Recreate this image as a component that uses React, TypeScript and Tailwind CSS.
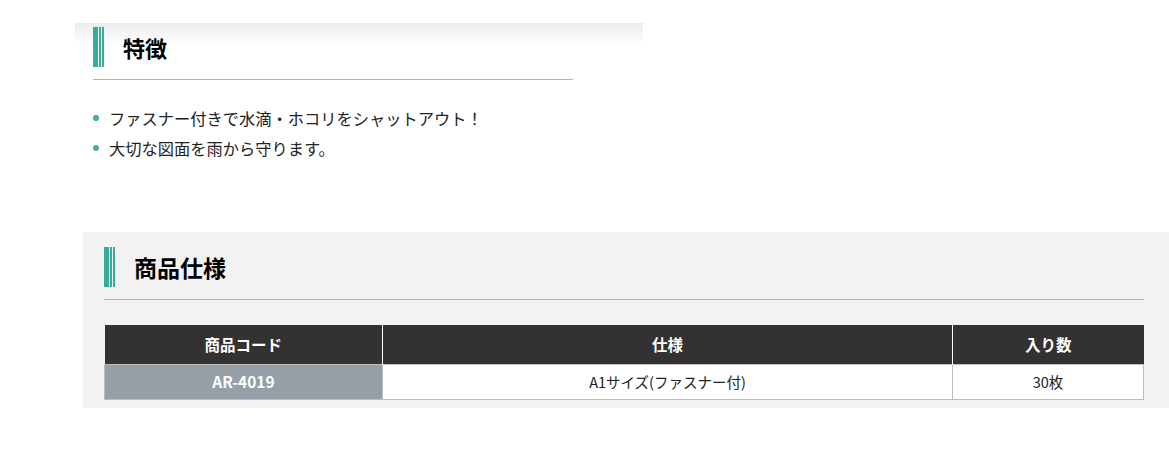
import React from "react";

const Stripes = () => (
  <div className="flex h-[40px] shrink-0">
    <div className="w-[5px] h-full bg-[#3aab9b]" />
    <div className="w-[1px] h-full" />
    <div className="w-[2px] h-full bg-[#3aab9b]" />
    <div className="w-[1px] h-full" />
    <div className="w-[2px] h-full bg-[#3aab9b]" />
  </div>
);

export default function App() {
  return (
    <div
      className="w-[1169px] h-[449px] bg-white overflow-hidden text-[#222]"
      style={{ fontFamily: '"Noto Sans CJK JP", "Noto Sans", sans-serif' }}
    >
      <div className="mt-[23px] ml-[75px] w-[568px] bg-gradient-to-b from-[#ececec] to-white to-[22px] pt-[4px] pl-[18px]">
        <div className="flex items-center">
          <Stripes />
          <h2 className="ml-[19px] text-[22px] font-bold leading-none text-black">特徴</h2>
        </div>
        <div className="mt-[12px] w-[480px] h-[1px] bg-[#b4b4b4]" />
      </div>

      <ul className="ml-[93px] mt-[23px] text-[16.25px] text-[#222]">
        <li className="flex items-center h-[30px]">
          <span className="w-[6px] h-[6px] rounded-full bg-[#3fb0a0] mr-[10px]" />
          ファスナー付きで水滴・ホコリをシャットアウト！
        </li>
        <li className="flex items-center h-[30px]">
          <span className="w-[6px] h-[6px] rounded-full bg-[#3fb0a0] mr-[10px]" />
          大切な図面を雨から守ります。
        </li>
      </ul>

      <div className="mt-[69px] ml-[83px] w-[1086px] bg-[#f2f2f2] pt-[15px] pl-[21px] pr-[25px] pb-[8px]">
        <div className="flex items-center">
          <Stripes />
          <h2 className="ml-[19px] text-[23px] font-bold leading-none text-black">商品仕様</h2>
        </div>
        <div className="mt-[12px] h-[1px] bg-[#b4b4b4]" />
        <table className="mt-[25px] w-[1040px] border-collapse text-center">
          <thead>
            <tr className="bg-[#333132] text-white text-[15.5px] font-bold h-[39px]">
              <th className="w-[278px] border-r border-white font-bold">商品コード</th>
              <th className="w-[570px] border-r border-white font-bold">仕様</th>
              <th className="font-bold">入り数</th>
            </tr>
          </thead>
          <tbody>
            <tr className="h-[35px] text-[14.5px]">
              <td className="bg-[#959fa5] text-white text-[15.5px] font-bold border border-[#bdbdbd]">AR-4019</td>
              <td className="bg-white text-[#222] border border-[#bdbdbd]">A1サイズ(ファスナー付)</td>
              <td className="bg-white text-[#222] border border-[#bdbdbd]">30枚</td>
            </tr>
          </tbody>
        </table>
      </div>
    </div>
  );
}
